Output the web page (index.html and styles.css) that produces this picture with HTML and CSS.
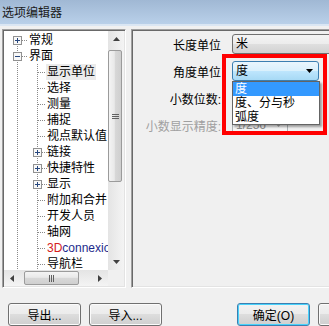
FILE: index.html
```html
<!DOCTYPE html>
<html lang="zh-CN">
<head>
    <meta charset="UTF-8">
    <title>选项编辑器</title>
    <link rel="stylesheet" href="styles.css">
</head>
<body>
    <div class="titlebar">选项编辑器</div>

    <div class="main">
        <!-- left: category tree -->
        <div class="tree-panel">
            <div class="tree">
                <div class="row"><span class="c node-first"><svg class="box" width="9" height="9" viewBox="0 0 9 9"><rect x=".5" y=".5" width="8" height="8" fill="#f8f8f8" stroke="#919191"/><path d="M2 4.5h5M4.5 2v5" stroke="#27477e"/></svg></span><span class="label l0">常规</span></div>
                <div class="row"><span class="c node"><svg class="box" width="9" height="9" viewBox="0 0 9 9"><rect x=".5" y=".5" width="8" height="8" fill="#f8f8f8" stroke="#919191"/><path d="M2 4.5h5" stroke="#27477e"/></svg></span><span class="label l0">界面</span></div>
                <div class="row"><span class="c pipe"></span><span class="c tee"></span><span class="label sel">显示单位</span></div>
                <div class="row"><span class="c pipe"></span><span class="c tee"></span><span class="label">选择</span></div>
                <div class="row"><span class="c pipe"></span><span class="c tee"></span><span class="label">测量</span></div>
                <div class="row"><span class="c pipe"></span><span class="c tee"></span><span class="label">捕捉</span></div>
                <div class="row"><span class="c pipe"></span><span class="c tee"></span><span class="label">视点默认值</span></div>
                <div class="row"><span class="c pipe"></span><span class="c node"><svg class="box" width="9" height="9" viewBox="0 0 9 9"><rect x=".5" y=".5" width="8" height="8" fill="#f8f8f8" stroke="#919191"/><path d="M2 4.5h5M4.5 2v5" stroke="#27477e"/></svg></span><span class="label">链接</span></div>
                <div class="row"><span class="c pipe"></span><span class="c node"><svg class="box" width="9" height="9" viewBox="0 0 9 9"><rect x=".5" y=".5" width="8" height="8" fill="#f8f8f8" stroke="#919191"/><path d="M2 4.5h5M4.5 2v5" stroke="#27477e"/></svg></span><span class="label">快捷特性</span></div>
                <div class="row"><span class="c pipe"></span><span class="c node"><svg class="box" width="9" height="9" viewBox="0 0 9 9"><rect x=".5" y=".5" width="8" height="8" fill="#f8f8f8" stroke="#919191"/><path d="M2 4.5h5M4.5 2v5" stroke="#27477e"/></svg></span><span class="label">显示</span></div>
                <div class="row"><span class="c pipe"></span><span class="c tee"></span><span class="label">附加和合并</span></div>
                <div class="row"><span class="c pipe"></span><span class="c tee"></span><span class="label">开发人员</span></div>
                <div class="row"><span class="c pipe"></span><span class="c tee"></span><span class="label">轴网</span></div>
                <div class="row"><span class="c pipe"></span><span class="c tee"></span><span class="label blue"><span class="red">3D</span>connexion</span></div>
                <div class="row"><span class="c pipe"></span><span class="c tee"></span><span class="label">导航栏</span></div>
            </div>

            <div class="vscroll">
                <div class="sb-btn"><svg width="7" height="4" viewBox="0 0 7 4"><path d="M3.5 0L7 4H0z" fill="#404040"/></svg></div>
                <div class="sb-track">
                    <div class="vthumb"><svg width="7" height="5" viewBox="0 0 7 5"><path d="M0 .5h7M0 2.5h7M0 4.5h7" stroke="#606060"/></svg></div>
                </div>
                <div class="sb-btn"><svg width="7" height="4" viewBox="0 0 7 4"><path d="M0 0h7L3.5 4z" fill="#404040"/></svg></div>
            </div>

            <div class="hscroll">
                <div class="sb-btn"><svg width="4" height="7" viewBox="0 0 4 7"><path d="M4 0v7L0 3.5z" fill="#404040"/></svg></div>
                <div class="sb-track">
                    <div class="hthumb"><svg width="5" height="7" viewBox="0 0 5 7"><path d="M.5 0v7M2.5 0v7M4.5 0v7" stroke="#606060"/></svg></div>
                </div>
                <div class="sb-btn"><svg width="4" height="7" viewBox="0 0 4 7"><path d="M0 0l4 3.5L0 7z" fill="#404040"/></svg></div>
            </div>
            <div class="corner"></div>
        </div>

        <!-- right: settings of the selected page -->
        <div class="props-panel">
            <div class="form">
                <span class="lbl">长度单位</span>
                <div class="combo wide"><span>米</span></div>

                <span class="lbl">角度单位</span>
                <div class="combo-wrap">
                    <div class="combo hot"><span>度</span><svg width="7" height="4" viewBox="0 0 7 4"><path d="M0 0h7L3.5 4z" fill="#000"/></svg></div>
                    <ul class="droplist">
                        <li class="picked">度</li>
                        <li>度、分与秒</li>
                        <li>弧度</li>
                    </ul>
                </div>

                <span class="lbl">小数位数:</span>
                <div class="combo small"><span>2</span></div>

                <span class="lbl off">小数显示精度:</span>
                <div class="combo small off"><span>1/256</span><svg width="7" height="4" viewBox="0 0 7 4"><path d="M0 0h7L3.5 4z" fill="#a8a8a8"/></svg></div>
            </div>
            <div class="mark"></div>
        </div>
    </div>

    <div class="buttons">
        <button class="btn">导出...</button>
        <button class="btn">导入...</button>
        <button class="btn focus push">确定(O)</button>
        <button class="btn">取消</button>
    </div>
</body>
</html>
```

FILE: styles.css
```css
:root {
    --dv: repeating-linear-gradient(to bottom, #8a8a8a 0 1px, transparent 1px 2px);
    --dh: repeating-linear-gradient(to right, #8a8a8a 0 1px, transparent 1px 2px);
}
body {
    margin: 0;
    width: 329px;
    height: 326px;
    overflow: hidden;
    background-color: #f0f0f0;
    font-family: "Liberation Sans", "Noto Sans CJK SC", sans-serif;
    font-size: 12px;
    color: #000;
}

.titlebar {
    height: 22px;
    padding: 2px 0 0 2px;
    line-height: 22px;
    background: linear-gradient(#a0b8d4, #b9d0e9);
    border-bottom: 2px solid #dae6f3;
    color: #1a1a1a;
}

.main {
    display: flex;
    gap: 5px;
    margin-top: 3px;
    padding-left: 2px;
    height: 259px;
}

/* sunken frames */
.tree-panel, .props-panel {
    box-sizing: border-box;
    border: 1px solid;
    border-color: #a0a0a0 #ffffff #ffffff #a0a0a0;
    box-shadow: inset 1px 1px 0 #696969, inset -1px -1px 0 #e3e3e3;
    padding: 1px;
}
.tree-panel {
    width: 124px;
    flex: none;
    display: grid;
    grid-template-columns: 104px 16px;
    grid-template-rows: 239px 16px;
}
.props-panel {
    width: 220px;
    flex: none;
    position: relative;
}

/* tree */
.tree {
    background: #fff;
    overflow: hidden;
    padding: 1px 0 0 3px;
}
.row {
    display: flex;
    height: 16px;
}
.c {
    flex: none;
    width: 20px;
    height: 16px;
}
.c .box {
    display: block;
    margin: 4px 0 0 6px;
}
.pipe {
    background: var(--dv) 10px 0 / 1px 16px no-repeat;
}
.tee {
    background: var(--dv) 10px 0 / 1px 16px no-repeat, var(--dh) 11px 8px / 8px 1px no-repeat;
}
.node {
    background: var(--dv) 10px 0 / 1px 16px no-repeat, var(--dh) 15px 8px / 5px 1px no-repeat;
}
.node-first {
    background: var(--dv) 10px 8px / 1px 8px no-repeat, var(--dh) 15px 8px / 5px 1px no-repeat;
}
.label {
    line-height: 16px;
    white-space: nowrap;
}
.l0 {
    margin-left: 2px;
}
.sel {
    background: #ebebeb;
    margin-left: -1px;
    padding: 0 1px;
}
.blue {
    color: #1c2a8c;
}
.red {
    color: #d42020;
}

/* scrollbars */
.vscroll {
    display: flex;
    flex-direction: column;
    background: linear-gradient(90deg, #e4e4e4, #f4f4f4);
}
.hscroll {
    display: flex;
    background: linear-gradient(#e4e4e4, #f4f4f4);
}
.corner {
    background: #f0f0f0;
}
.sb-btn {
    flex: none;
    width: 16px;
    height: 16px;
    display: flex;
    align-items: center;
    justify-content: center;
}
.sb-track {
    flex: 1;
    display: flex;
}
.vscroll .sb-track {
    flex-direction: column;
    padding-top: 3px;
}
.vthumb, .hthumb {
    box-sizing: border-box;
    border: 1px solid #9b9b9b;
    border-radius: 2px;
    display: flex;
    align-items: center;
    justify-content: center;
}
.vthumb {
    width: 14px;
    height: 132px;
    background: linear-gradient(90deg, #f4f4f4, #e9e9e9 45%, #d8d8d8 50%, #cfcfcf);
}
.hthumb {
    width: 55px;
    height: 14px;
    margin: 1px 0 0 4px;
    background: linear-gradient(#f4f4f4, #e9e9e9 45%, #d8d8d8 50%, #cfcfcf);
}

/* settings form */
.form {
    display: grid;
    grid-template-columns: 88px auto;
    grid-auto-rows: 20px;
    column-gap: 11px;
    row-gap: 7px;
    align-items: center;
    justify-items: start;
    padding-top: 3px;
}
.lbl {
    justify-self: end;
    white-space: nowrap;
}
.lbl.off {
    color: #a0a0a0;
}
.combo {
    box-sizing: border-box;
    height: 20px;
    border: 1px solid #707070;
    border-radius: 3px;
    background: linear-gradient(#f4f4f4, #ececec 50%, #dfdfdf 50%, #d2d2d2);
    display: flex;
    align-items: center;
    justify-content: space-between;
    padding: 0 5px 0 3px;
    line-height: 18px;
}
.combo.wide {
    width: 110px;
}
.combo.small {
    width: 56px;
}
.combo.off {
    border-color: #adb2b5;
    background: #f4f4f4;
    color: #8d8d8d;
    height: 19px;
}
.combo-wrap {
    position: relative;
}
.combo.hot {
    width: 87px;
    border-color: #3c7fb1;
    background: linear-gradient(#eaf6fd, #d9f0fc 50%, #bee6fd 50%, #a7d9f5);
}
.droplist {
    position: absolute;
    top: 20px;
    left: 0;
    width: 88px;
    box-sizing: border-box;
    margin: 0;
    padding: 0;
    list-style: none;
    background: #fff;
    border: 1px solid #646464;
    box-shadow: 2px 2px 2px rgba(0, 0, 0, 0.35);
}
.droplist li {
    height: 14px;
    line-height: 14px;
    padding-left: 2px;
    white-space: nowrap;
}
.droplist .picked {
    background: #3399ff;
    color: #fff;
}

/* red annotation frame */
.mark {
    position: absolute;
    left: 90px;
    top: 24px;
    width: 105px;
    height: 81px;
    box-sizing: border-box;
    border: 4px solid #ff0000;
}

/* bottom buttons */
.buttons {
    display: flex;
    gap: 8px;
    margin-top: 15px;
    padding-left: 8px;
}
.btn {
    flex: none;
    width: 73px;
    height: 23px;
    padding: 0;
    font: inherit;
    color: #000;
    border: 1px solid #707070;
    border-radius: 3px;
    background: linear-gradient(#f2f2f2, #ebebeb 50%, #dddddd 50%, #cfcfcf);
    box-shadow: inset 0 0 0 1px #fbfbfb;
}
.btn.focus {
    border-color: #3c7fb1;
    box-shadow: inset 0 0 0 1px #48d2fb;
}
.push {
    margin-left: 67px;
}
```
